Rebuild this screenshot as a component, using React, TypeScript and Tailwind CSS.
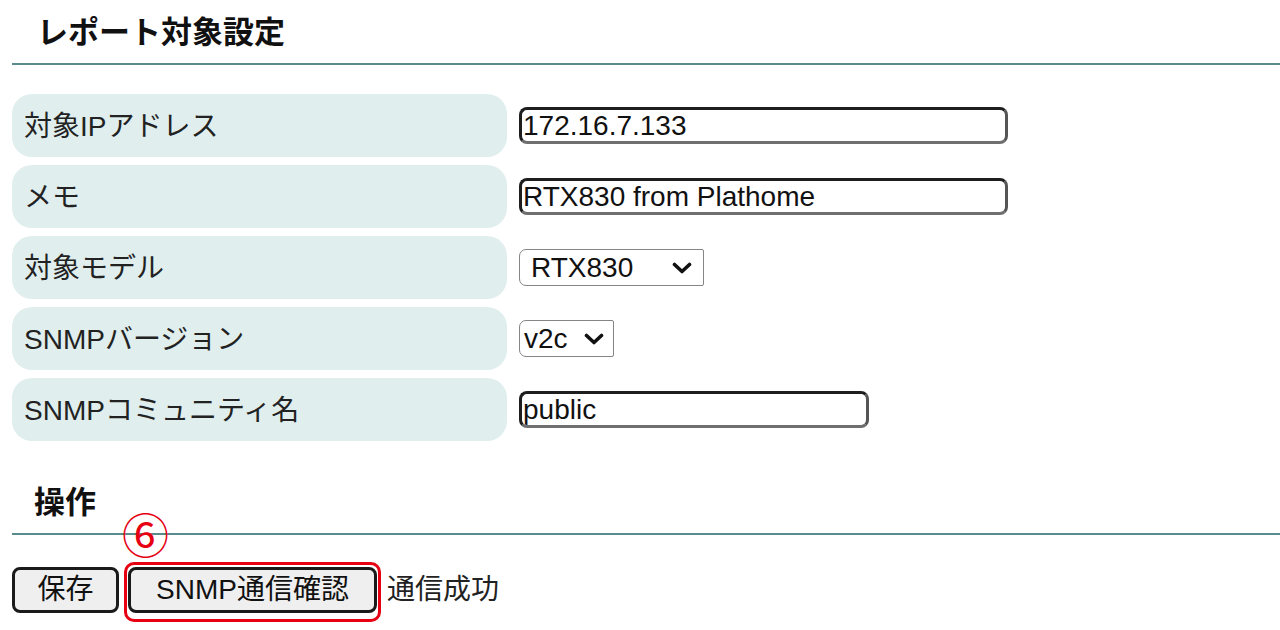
import { useState } from 'react';

const font = "font-['Liberation_Sans','Noto_Sans_CJK_JP',sans-serif]";

const Chevron = ({ className }: { className?: string }) => (
  <svg viewBox="0 0 20 12" className={className} fill="none" stroke="#111" strokeWidth={3.6} strokeLinecap="round" strokeLinejoin="round">
    <path d="M2.5 2.5 L10 9.5 L17.5 2.5" />
  </svg>
);

const TextBox = ({ value, width }: { value: string; width: string }) => (
  <input
    type="text"
    defaultValue={value}
    className={`${width} h-[37px] rounded-[8px] border-[3px] border-[#1e1e1e] border-b-[#6f6f6f] border-r-[#555] bg-white pl-[1px] text-[28px] leading-none text-[#111] outline-none ${font}`}
  />
);

const SelectBox = ({ value, options, width, pad, chevronRight }: { value: string; options: string[]; width: string; pad: string; chevronRight: string }) => {
  const [v, setV] = useState(value);
  return (
    <div className={`relative ${width} h-[37px]`}>
      <select
        value={v}
        onChange={(e) => setV(e.target.value)}
        className={`h-full w-full appearance-none rounded-l-[7px] rounded-r-[2px] border border-[#858585] bg-white ${pad} text-[28px] leading-none text-[#111] outline-none ${font}`}
      >
        {options.map((o) => (
          <option key={o}>{o}</option>
        ))}
      </select>
      <Chevron className={`pointer-events-none absolute top-[13px] ${chevronRight} h-[12px] w-[20px]`} />
    </div>
  );
};

const Row = ({ label, children }: { label: string; children: React.ReactNode }) => (
  <div className="flex items-center gap-[12px]">
    <div className="flex h-[63px] w-[495px] shrink-0 items-center rounded-[20px] bg-[#e0eeee] pl-[12px] pt-[3px] text-[28px] text-[#222]">
      {label}
    </div>
    {children}
  </div>
);

export default function App() {
  return (
    <div className={`min-h-[630px] w-full overflow-hidden bg-white pl-[12px] text-[#222] ${font}`}>
      {/* レポート対象設定 */}
      <h2 className="border-b-2 border-[#5b8a8c] pt-[10px] pb-[8px] pl-[25px] text-[31px] font-bold leading-[45px] text-[#111]">
        レポート対象設定
      </h2>

      <div className="mt-[29px] flex flex-col gap-[8px]">
        <Row label="対象IPアドレス">
          <TextBox value="172.16.7.133" width="w-[489px]" />
        </Row>
        <Row label="メモ">
          <TextBox value="RTX830 from Plathome" width="w-[489px]" />
        </Row>
        <Row label="対象モデル">
          <SelectBox value="RTX830" options={['RTX830', 'RTX1210', 'NVR510']} width="w-[185px]" pad="pl-[11px]" chevronRight="right-[12px]" />
        </Row>
        <Row label="SNMPバージョン">
          <SelectBox value="v2c" options={['v1', 'v2c']} width="w-[95px]" pad="pl-[4px]" chevronRight="right-[10px]" />
        </Row>
        <Row label="SNMPコミュニティ名">
          <TextBox value="public" width="w-[350px]" />
        </Row>
      </div>

      {/* 操作 */}
      <h2 className="mt-[39px] border-b-2 border-[#5b8a8c] pb-[8px] pl-[22px] text-[31px] font-bold leading-[45px] text-[#111]">
        操作
      </h2>

      <div className="mt-[27px] flex items-start">
        <button className="mt-[5px] h-[46px] w-[107px] rounded-[8px] border-[3px] border-[#1a1a1a] bg-[#efefef] text-[28px] leading-none text-[#111]">
          保存
        </button>
        <div className="relative ml-[5px] rounded-[10px] border-[3px] border-[#e60012] px-[1px] pt-[2px] pb-[6px]">
          <span className="absolute left-[-5px] top-[-52px] text-[47px] leading-none text-[#e60012]">⑥</span>
          <button className="h-[46px] w-[249px] rounded-[8px] border-[3px] border-[#1a1a1a] bg-[#efefef] text-[28px] leading-none text-[#111]">
            SNMP通信確認
          </button>
        </div>
        <span className="ml-[6px] mt-[7px] text-[28px] leading-[42px] text-[#222]">通信成功</span>
      </div>
    </div>
  );
}
